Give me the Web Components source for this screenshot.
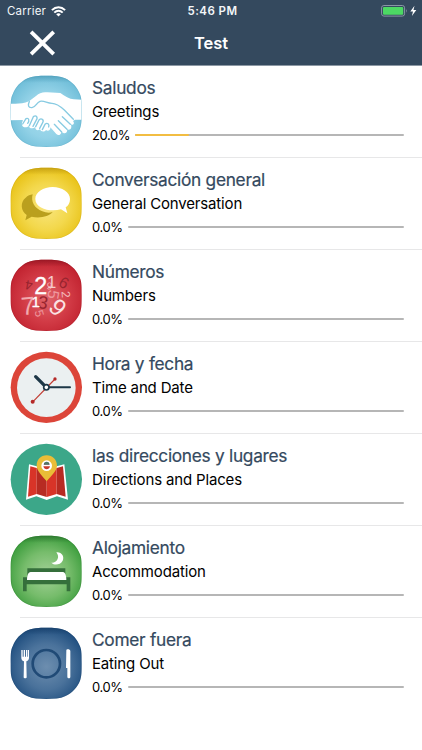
<!DOCTYPE html>
<html lang="es">
<head>
<meta charset="utf-8">
<title>Test</title>
<style>
  body {
    margin: 0;
    background: #fff;
    font-family: Inter, "Liberation Sans", sans-serif;
    overflow: hidden;
  }
</style>
</head>
<body>
<test-screen>
  <status-bar slot="top" carrier="Carrier" time="5:46 PM"></status-bar>
  <nav-bar slot="top">Test</nav-bar>
  <topic-row icon="hands" progress="20">
    <span slot="title">Saludos</span>
    <span slot="subtitle">Greetings</span>
  </topic-row>
  <topic-row icon="chat" progress="0">
    <span slot="title">Conversación general</span>
    <span slot="subtitle">General Conversation</span>
  </topic-row>
  <topic-row icon="numbers" progress="0">
    <span slot="title">Números</span>
    <span slot="subtitle">Numbers</span>
  </topic-row>
  <topic-row icon="clock" progress="0">
    <span slot="title">Hora y fecha</span>
    <span slot="subtitle">Time and Date</span>
  </topic-row>
  <topic-row icon="map" progress="0">
    <span slot="title">las direcciones y lugares</span>
    <span slot="subtitle">Directions and Places</span>
  </topic-row>
  <topic-row icon="bed" progress="0">
    <span slot="title">Alojamiento</span>
    <span slot="subtitle">Accommodation</span>
  </topic-row>
  <topic-row icon="food" progress="0">
    <span slot="title">Comer fuera</span>
    <span slot="subtitle">Eating Out</span>
  </topic-row>
</test-screen>

<script>
// rounded badge behind most of the icons
const BADGE = "M138 28C160 28 180 29 194 36C216 46 231 63 239 84C244 96 244 108 244 135C244 162 244 174 239 187C231 207 216 224 194 234C180 241 160 242 138 242C116 242 96 241 82 234C60 224 45 207 37 187C31 174 31 162 31 135C31 108 31 96 37 84C45 63 60 46 82 36C96 29 116 28 138 28Z";

const badge = (inner, mid, outer, edge) => `
  <defs>
    <radialGradient id="fill" gradientUnits="userSpaceOnUse" cx="138" cy="145" r="125">
      <stop offset="0" stop-color="${inner}"/>
      <stop offset=".55" stop-color="${mid}"/>
      <stop offset="1" stop-color="${outer}"/>
    </radialGradient>
    <linearGradient id="shade" x1="0" y1="0" x2="0" y2="1">
      <stop offset="0" stop-color="${edge}" stop-opacity=".7"/>
      <stop offset=".1" stop-color="${edge}" stop-opacity="0"/>
    </linearGradient>
    <clipPath id="clip"><path d="${BADGE}"/></clipPath>
  </defs>
  <path d="${BADGE}" fill="url(#fill)"/>
  <path d="${BADGE}" fill="url(#shade)"/>
  <path d="${BADGE}" fill="none" stroke="${edge}" stroke-width="4" stroke-opacity=".25" clip-path="url(#clip)"/>`;

// a digit centred on x, y
const digit = (char, x, y, size, angle, color) =>
  `<text text-anchor="middle" font-size="${size}" y="${size * 0.36}" fill="${color}" transform="translate(${x} ${y}) rotate(${angle})">${char}</text>`;

const ICONS = {
  hands: `${badge("#a6ddee", "#93d2e7", "#6ebdd8", "#4b9ab6")}
    <g clip-path="url(#clip)">
      <path fill="#fff" d="M31 112C50 113 67 113 86 105L108 88C116 80 128 76 141 78L180 80C193 90 208 98 220 99L246 100V160H224L218 164C224 170 219 178 211 174C217 184 209 194 200 189C203 199 192 205 184 196C181 207 174 209 168 203L150 183C151 191 143 197 137 191C132 198 122 197 119 189C112 195 103 189 105 181C98 189 86 187 86 178C79 185 67 185 65 175C63 169 69 164 67 161L31 162Z"/>
      <g fill="none" stroke="#88cbe2" stroke-width="4" stroke-linecap="round" stroke-linejoin="round">
        <path d="M87 106C82 116 83 125 95 124C106 123 108 109 119 105C132 102 140 111 155 111C168 111 181 121 192 131L219 159"/>
        <path d="M67 173L77 157C86 153 88 164 82 171M87 178L99 151C108 145 114 153 107 163L98 180M106 181L116 161C123 154 132 160 127 169L118 186M126 190L134 174C141 167 148 174 145 182"/>
        <path d="M186 151L210 174M174 163L200 189M162 174L184 197"/>
      </g>
    </g>`,
  chat: `${badge("#f9e680", "#f3d84c", "#e8c114", "#ba9510")}
    <path fill="#baa01e" d="M97 108C91 129 102 150 126 159C137 164 149 164 157 161C146 174 119 181 94 175L75 186L79 170C61 158 59 131 76 118C82 112 90 109 97 108Z"/>
    <path fill="#fff" d="M157 86C185 86 209 101 209 122C209 134 204 142 196 147L201 165L182 153C153 161 105 153 105 122C105 101 129 86 157 86Z"/>`,
  numbers: `${badge("#e0646a", "#d23b46", "#c0212e", "#8b1421")}
    <g font-family="'Liberation Sans', Arial, sans-serif">
      ${digit("4", 85, 105, 40, 190, "#98242e")}
      ${digit("6", 147, 107, 30, 185, "#f3aaad")}
      ${digit("1", 154, 96, 50, 0, "#f6cacc")}
      ${digit("6", 191, 97, 47, 30, "#98242e")}
      ${digit("5", 160, 133, 48, 100, "#ee979d")}
      ${digit("2", 197, 132, 36, 85, "#f4b9bc")}
      ${digit("7", 83, 166, 76, -5, "#f1aaae")}
      ${digit("3", 128, 156, 54, 10, "#98242e")}
      ${digit("9", 173, 170, 72, 45, "#fbe3e4")}
      ${digit("5", 118, 189, 36, 75, "#ee979d")}
      <g stroke="#fff">
        ${digit("1", 106, 154, 46, 0, "#fff")}
        ${digit("2", 121, 107, 70, 0, "#fff")}
      </g>
    </g>`,
  clock: `<circle cx="138" cy="135" r="107" fill="#dc4539"/>
    <circle cx="138" cy="136" r="88" fill="#ebf0f1"/>
    <path d="M98 178L164 110" stroke="#c13b32" stroke-width="3.5"/>
    <circle cx="97" cy="178" r="6" fill="#b52928"/><circle cx="164" cy="110" r="5" fill="#b52928"/>
    <path d="M138 135H209" stroke="#1d3747" stroke-width="6" stroke-linecap="round"/>
    <path d="M138 135L106 103" stroke="#1d3747" stroke-width="10" stroke-linecap="round"/>
    <circle cx="138" cy="135" r="8" fill="#fff" stroke="#1d3747" stroke-width="5"/>`,
  map: `<circle cx="138" cy="135" r="107" fill="#3ca789"/>
    <path fill="#fff" d="M86 90L109 96L139 90L169 96L192 90L203 196L170 186L139 197L108 186L77 196Z"/>
    <path fill="#d83428" d="M90 96L109 101V179L83 187Z"/><path fill="#b72b22" d="M109 101L139 95V188L109 179Z"/>
    <path fill="#d83428" d="M139 95L169 101V179L139 188Z"/><path fill="#b72b22" d="M169 101L188 96L196 187L169 179Z"/>
    <path fill="#e9bd37" d="M139 63C157 63 170 77 170 94C170 110 150 127 139 141C128 127 109 110 109 94C109 77 121 63 139 63Z"/>
    <circle cx="139" cy="94" r="16" fill="#fff"/>
    <path fill="#434b4b" d="M130 91C131 79 147 79 148 91Z"/>
    <path fill="#c93a2e" d="M129 96H149C147 108 131 108 129 96Z"/>
    <path d="M133 86H145" stroke="#5ca786" stroke-width="3"/>`,
  bed: `${badge("#a4d198", "#76bc6b", "#3a9c3b", "#286d2b")}
    <path fill="#fff" d="M168 78C184 76 193 91 187 103C180 116 162 118 153 109C168 111 181 94 168 78Z"/>
    <path fill="#356f3b" d="M81 126H195V153H210V195H199V174H79V195H68V153H81Z"/>
    <path fill="#fff" d="M91 137H188C195 138 198 149 198 161H80C80 149 83 138 91 137Z"/>`,
  food: `${badge("#6d8eaf", "#4a729b", "#1e4d7e", "#173e69")}
    <circle cx="138" cy="136" r="41" fill="none" stroke="#204a76" stroke-width="8"/>
    <path fill="#fff" d="M63 95H67V115H70V95H74V115H77V95H81V115H83V95H86V119C86 125 81 128 78 129L79 177C79 181 70 181 70 177L71 129C67 128 63 124 63 119Z"/>
    <path fill="#fff" d="M198 96C198 91 210 92 210 98V176C210 182 201 181 201 175V149H197Z"/>`
};

class TopicIcon extends HTMLElement {
  static get observedAttributes() {
    return ["name"];
  }

  constructor() {
    super();
    this.attachShadow({ mode: "open" });
  }

  attributeChangedCallback() {
    this.shadowRoot.innerHTML = `
      <style>
        :host { display: block; width: 72px; height: 72px; }
        svg { display: block; }
      </style>
      <svg width="72" height="72" viewBox="29 26 216 216">${ICONS[this.getAttribute("name")]}</svg>`;
  }
}

const statusTemplate = document.createElement("template");
statusTemplate.innerHTML = `
<style>
  :host {
    display: grid;
    grid-template-columns: 1fr auto 1fr;
    align-items: center;
    height: 22px;
    box-sizing: border-box;
    padding: 0 4px 0 7px;
    color: #f3f6f8;
    font-size: 11.5px;
    line-height: 20px;
  }
  svg { display: block; }
  .left { display: flex; align-items: center; gap: 5px; }
  .carrier { letter-spacing: 0.2px; }
  .time { font-weight: 600; letter-spacing: 0.45px; }
  .power { justify-self: end; }
</style>
<div class="left">
  <span class="carrier"></span>
  <svg width="15" height="11" viewBox="0 0 15 11" fill="none" stroke="#fff" stroke-width="2">
    <path d="M.9 4.1C4.8.3 10.2.3 14.1 4.1M3.3 6.6C5.8 4.2 9.2 4.2 11.7 6.6"/>
    <path d="M7.5 10.5L5.2 8.2C6.6 6.9 8.4 6.9 9.8 8.2Z" fill="#fff" stroke="none"/>
  </svg>
</div>
<span class="time"></span>
<svg class="power" width="37" height="13" viewBox="0 0 37 13">
  <rect x=".6" y="0.5" width="23" height="10.6" rx="2.3" fill="none" stroke="#8997a5"/>
  <rect x="2" y="1.9" width="20.2" height="7.8" rx="1" fill="#4cd964"/>
  <path d="M25 4Q26.5 5.8 25 7.7Z" fill="#8997a5"/>
  <path d="M33.5.8L29.3 6.6H32L30.9 11L35.3 5.1H32.5Z" fill="#fff"/>
</svg>
`;

class StatusBar extends HTMLElement {
  constructor() {
    super();
    const shadow = this.attachShadow({ mode: "open" });
    shadow.appendChild(statusTemplate.content.cloneNode(true));
    shadow.querySelector(".carrier").textContent = this.getAttribute("carrier");
    shadow.querySelector(".time").textContent = this.getAttribute("time");
  }
}

const navTemplate = document.createElement("template");
navTemplate.innerHTML = `
<style>
  :host {
    display: grid;
    grid-template-columns: 1fr auto 1fr;
    align-items: center;
    height: 42px;
    color: #fff;
    font-size: 16.5px;
    font-weight: 600;
  }
  svg { display: block; margin-left: 29px; }
</style>
<svg width="27" height="27" viewBox="0 0 27 27" stroke="#fff" stroke-width="3.8">
  <path d="M2.1 1.8L24.7 24.2M24.7 1.8L2.1 24.2"/>
</svg>
<slot></slot>
`;

class NavBar extends HTMLElement {
  constructor() {
    super();
    this.attachShadow({ mode: "open" }).appendChild(navTemplate.content.cloneNode(true));
  }
}

const rowTemplate = document.createElement("template");
rowTemplate.innerHTML = `
<style>
  :host {
    display: grid;
    grid-template-columns: 72px 1fr;
    column-gap: 10px;
    height: 92px;
    box-sizing: border-box;
    padding: 9px 18px 0 10px;
    background: linear-gradient(#e7e7e8, #e7e7e8) 20px 91px / 100% 1px no-repeat;
  }
  :host(:last-child) { background: none; }
  .title, .subtitle { white-space: nowrap; }
  .title {
    color: #34495e;
    font-size: 17.3px;
    line-height: 24px;
    letter-spacing: -0.28px;
    padding-top: 1px;
    -webkit-text-stroke: 0.2px #34495e;
  }
  .subtitle {
    color: #000;
    font-size: 15px;
    line-height: 23px;
    letter-spacing: -0.16px;
  }
  .progress {
    display: flex;
    align-items: center;
    gap: 5px;
    height: 24px;
    color: #000;
    font-size: 13px;
  }
  .percent { letter-spacing: -0.4px; }
  .track {
    flex: 1;
    height: 2px;
    border-radius: 1px;
    background: #b6b6b6;
  }
  .bar {
    height: 2px;
    border-radius: 1px;
    background: #f2bd42;
  }
</style>
<topic-icon></topic-icon>
<div>
  <div class="title"><slot name="title"></slot></div>
  <div class="subtitle"><slot name="subtitle"></slot></div>
  <div class="progress">
    <span class="percent"></span>
    <div class="track"><div class="bar"></div></div>
  </div>
</div>
`;

class TopicRow extends HTMLElement {
  constructor() {
    super();
    const shadow = this.attachShadow({ mode: "open" });
    shadow.appendChild(rowTemplate.content.cloneNode(true));

    const progress = Number(this.getAttribute("progress")) || 0;
    shadow.querySelector("topic-icon").setAttribute("name", this.getAttribute("icon"));
    shadow.querySelector(".percent").textContent = `${progress.toFixed(1)}%`;
    shadow.querySelector(".bar").style.width = `${progress}%`;
  }
}

const screenTemplate = document.createElement("template");
screenTemplate.innerHTML = `
<style>
  :host { display: block; width: 422px; height: 750px; background: #fff; }
  header { height: 65px; background: #34495e; border-bottom: 1px solid #8c98a4; }
</style>
<header><slot name="top"></slot></header>
<main><slot></slot></main>
`;

class TestScreen extends HTMLElement {
  constructor() {
    super();
    this.attachShadow({ mode: "open" }).appendChild(screenTemplate.content.cloneNode(true));
  }
}

customElements.define("topic-icon", TopicIcon);
customElements.define("status-bar", StatusBar);
customElements.define("nav-bar", NavBar);
customElements.define("topic-row", TopicRow);
customElements.define("test-screen", TestScreen);
</script>
</body>
</html>
